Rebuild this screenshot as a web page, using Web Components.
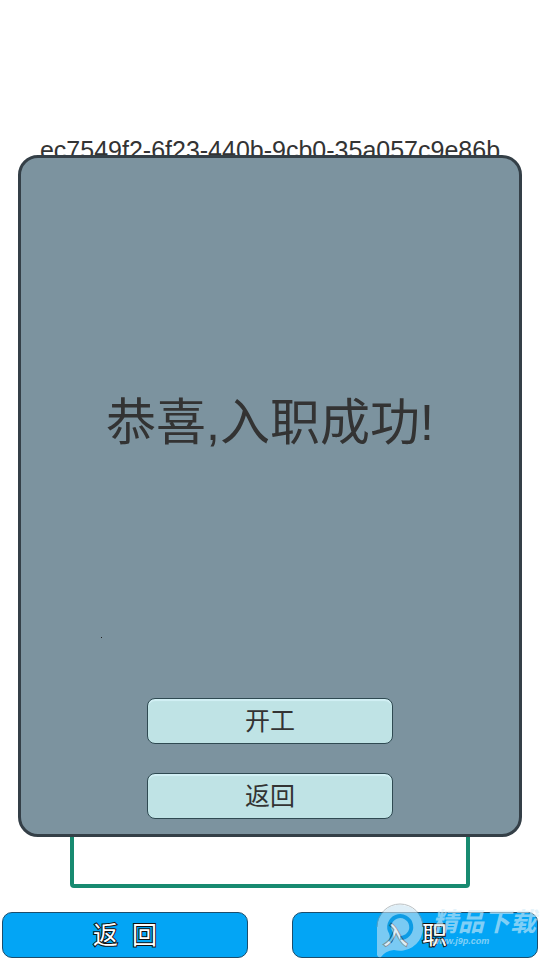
<!DOCTYPE html>
<html lang="zh-CN">
<head>
<meta charset="UTF-8">
<meta name="viewport" content="width=device-width, initial-scale=1.0">
<title>入职</title>
<style>
    body {
        margin: 0;
        background: #fff;
        color: #333;
        font-family: "Liberation Sans", "Noto Sans CJK SC", sans-serif;
    }
</style>
</head>
<body>
<onboard-page>
    <span slot="code">ec7549f2-6f23-440b-9cb0-35a057c9e86b</span>
    <action-button slot="actions" variant="primary">返&nbsp; 回</action-button>
    <action-button slot="actions" variant="primary">入&nbsp; 职</action-button>
    <result-dialog slot="dialog">
        恭喜,入职成功!
        <action-button slot="actions">开工</action-button>
        <action-button slot="actions">返回</action-button>
    </result-dialog>
    <site-mark slot="mark"></site-mark>
</onboard-page>

<script>
class OnboardPage extends HTMLElement {
    constructor() {
        super();
        this.attachShadow({ mode: 'open' });
    }

    connectedCallback() {
        this.shadowRoot.innerHTML = `
        <style>
            :host {
                position: relative;
                display: flex;
                flex-direction: column;
                box-sizing: border-box;
                min-height: 100vh;
                padding: 136px 2px 2px;
            }
            .code {
                font-size: 25px;
                line-height: 28px;
                text-align: center;
            }
            .frame {
                flex: 1;
                margin: 20px 68px 24px;
                border: 4px solid #178a70;
                border-radius: 4px;
            }
            footer {
                display: grid;
                grid-template-columns: 1fr 1fr;
                gap: 44px;
            }
            /* The dialog covers the code and most of the frame */
            ::slotted(result-dialog) {
                position: absolute;
                inset: 155px 18px 123px;
            }
            ::slotted(site-mark) {
                position: absolute;
                right: 4px;
                bottom: 2px;
            }
        </style>
        <div class="code"><slot name="code"></slot></div>
        <div class="frame"></div>
        <footer><slot name="actions"></slot></footer>
        <slot name="dialog"></slot>
        <slot name="mark"></slot>
        `;
    }
}

class ActionButton extends HTMLElement {
    constructor() {
        super();
        this.attachShadow({ mode: 'open' });
    }

    connectedCallback() {
        this.shadowRoot.innerHTML = `
        <style>
            :host {
                display: block;
            }
            button {
                display: block;
                box-sizing: border-box;
                width: 100%;
                height: 46px;
                padding: 0;
                border: 1px solid #2f4a52;
                border-radius: 8px;
                background: #bfe3e5;
                box-shadow: inset 0 2px 1px #d3f0f5;
                color: #333;
                font: inherit;
                font-size: 25px;
                line-height: 44px;
                cursor: pointer;
            }
            :host([variant="primary"]) button {
                border-color: #1d4d6b;
                border-radius: 10px;
                background: #03a5f5;
                box-shadow: none;
                color: #fff;
                -webkit-text-stroke: 2px #111;
                paint-order: stroke fill;
            }
        </style>
        <button type="button"><slot></slot></button>
        `;
    }
}

class ResultDialog extends HTMLElement {
    constructor() {
        super();
        this.attachShadow({ mode: 'open' });
    }

    connectedCallback() {
        this.setAttribute('role', 'dialog');
        this.shadowRoot.innerHTML = `
        <style>
            :host {
                display: flex;
                flex-direction: column;
                align-items: center;
                box-sizing: border-box;
                padding: 50px 0 15px;
                border: 3px solid #343f47;
                border-radius: 20px;
                background: #7c939f;
            }
            .message {
                flex: 1;
                display: flex;
                align-items: center;
                font-size: 50px;
                line-height: 60px;
                white-space: nowrap;
            }
            .dot {
                align-self: flex-start;
                width: 1px;
                height: 1px;
                margin: 0 0 60px 80px;
                background: #222;
            }
            .actions {
                display: flex;
                flex-direction: column;
                gap: 29px;
                width: 246px;
            }
        </style>
        <div class="message"><slot></slot></div>
        <div class="dot"></div>
        <div class="actions"><slot name="actions"></slot></div>
        `;
    }
}

class SiteMark extends HTMLElement {
    constructor() {
        super();
        this.attachShadow({ mode: 'open' });
    }

    connectedCallback() {
        this.shadowRoot.innerHTML = `
        <style>
            :host {
                display: flex;
                gap: 6px;
                pointer-events: none;
                opacity: 0.6;
            }
            .words {
                display: flex;
                flex-direction: column;
                padding-top: 6px;
                color: #d4ecf8;
                font-style: italic;
                font-weight: 700;
            }
            .name {
                font-size: 26px;
                line-height: 28px;
            }
            .url {
                font-size: 9px;
                line-height: 10px;
            }
        </style>
        <svg width="50" height="56" viewBox="0 0 50 56" aria-hidden="true">
            <path d="M1 53 V25 A23 23 0 1 1 18 48 Q9 49 5 55 Q2 56 1 53 Z" fill="#c9e4f2"/>
            <path d="M1 25 A23 23 0 0 1 47 25" fill="none" stroke="#8c989e"/>
            <path d="M14 40 Q17 36 15 31 A11 11 0 1 1 24 36" fill="none" stroke="#1597dc" stroke-width="4"/>
        </svg>
        <div class="words">
            <span class="name">精品下载</span>
            <span class="url">www.j9p.com</span>
        </div>
        `;
    }
}

customElements.define('onboard-page', OnboardPage);
customElements.define('action-button', ActionButton);
customElements.define('result-dialog', ResultDialog);
customElements.define('site-mark', SiteMark);
</script>
</body>
</html>
